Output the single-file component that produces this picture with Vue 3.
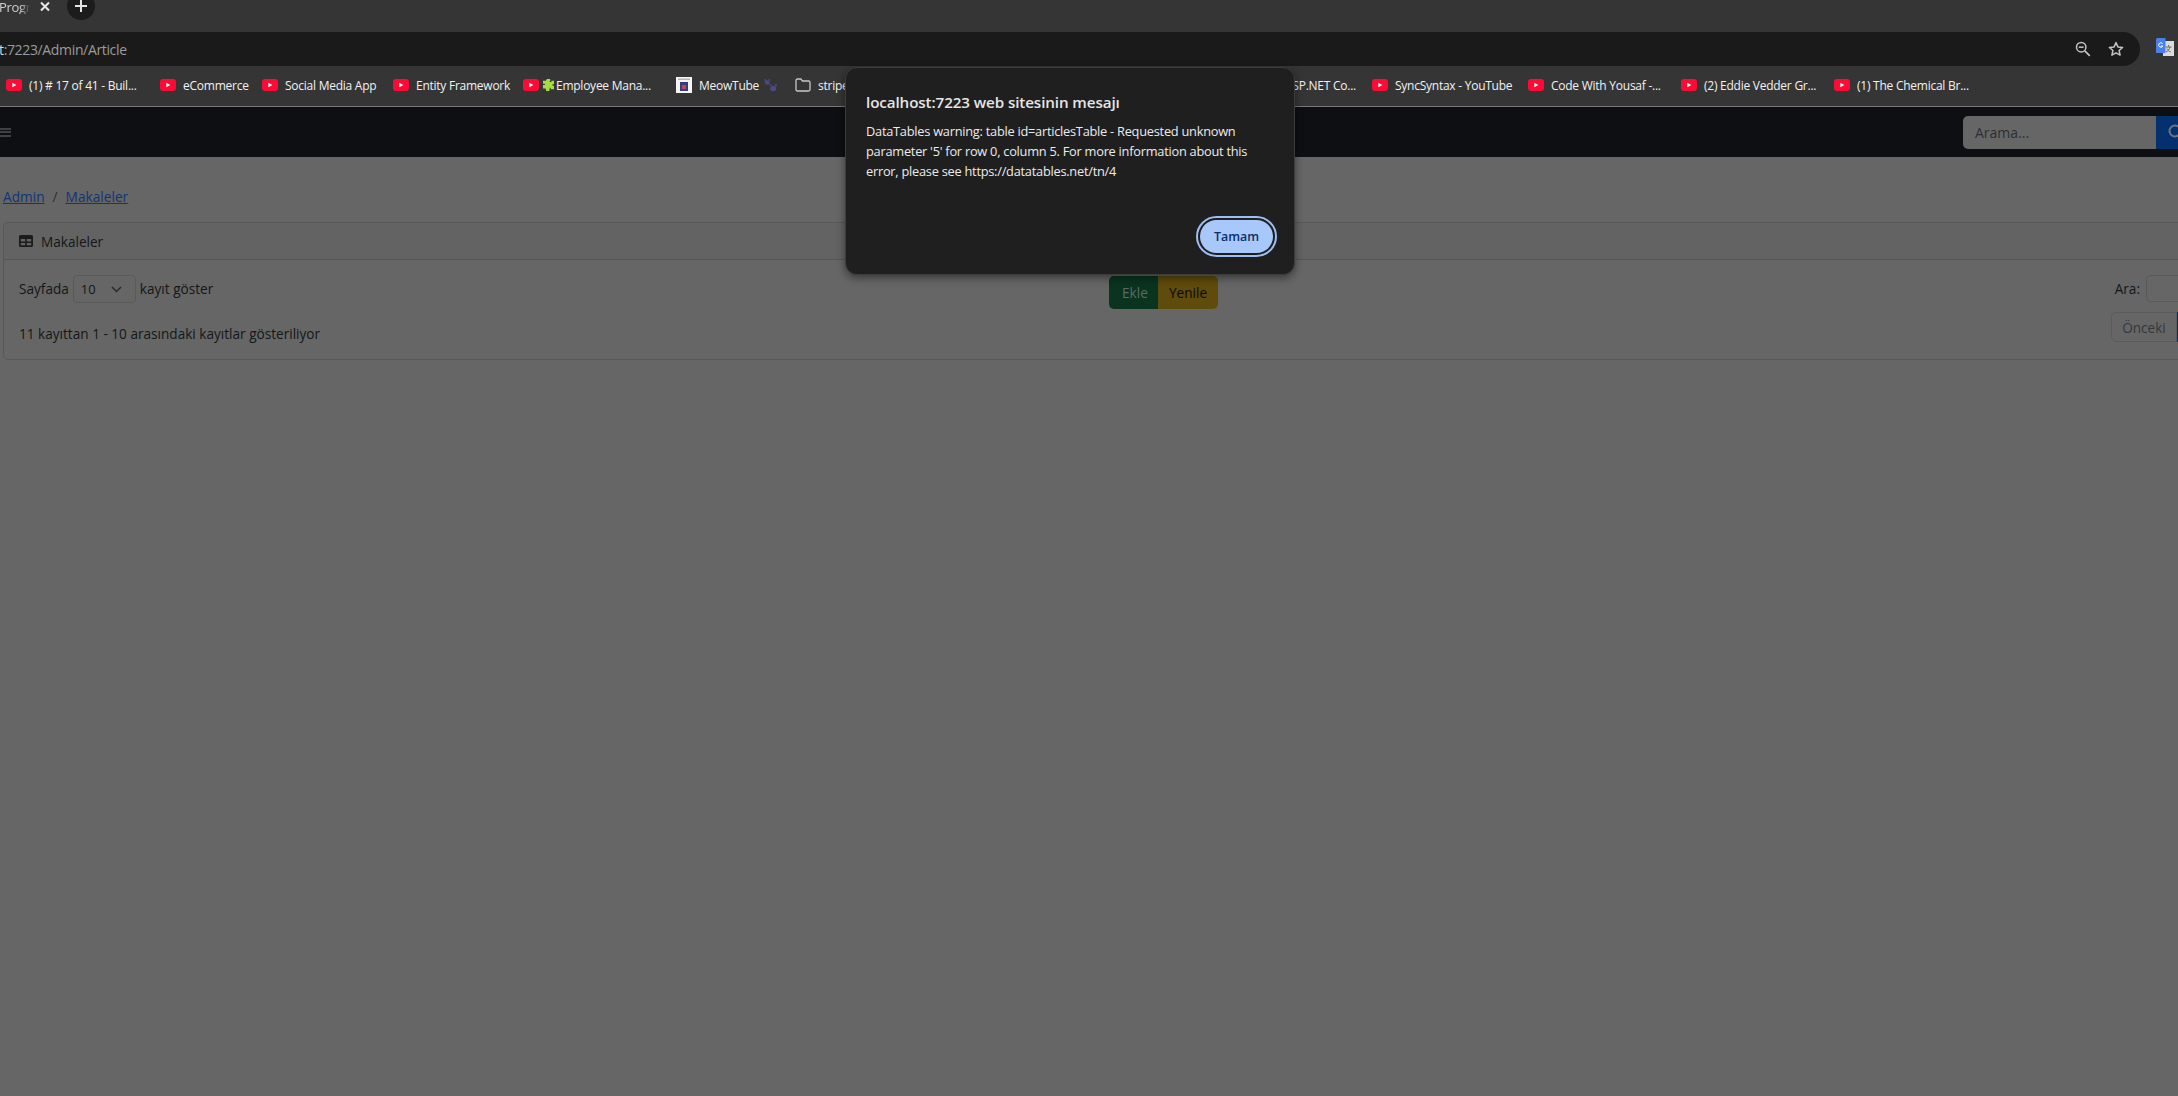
<script setup>
const bookmarks = [
  { kind: 'yt', text: '(1) # 17 of 41 - Buil...', width: 154 },
  { kind: 'yt', text: 'eCommerce', width: 102 },
  { kind: 'yt', text: 'Social Media App', width: 131 },
  { kind: 'yt', text: 'Entity Framework', width: 130 },
  { kind: 'puzzle', text: 'Employee Mana...', width: 153 },
  { kind: 'meow', text: 'MeowTube', width: 119 },
  { kind: 'folder', text: 'stripe', width: 467 },
  { kind: 'yt', text: 'ASP.NET Co...', width: 110 },
  { kind: 'yt', text: 'SyncSyntax - YouTube', width: 156 },
  { kind: 'yt', text: 'Code With Yousaf -...', width: 153 },
  { kind: 'yt', text: '(2) Eddie Vedder Gr...', width: 153 },
  { kind: 'yt', text: '(1) The Chemical Br...', width: 160 }
]
</script>

<template>
  <div class="screen">
    <div class="tabstrip">
      <span class="tab-title">Progra</span>
      <svg class="tab-close" width="12" height="12" viewBox="0 0 12 12">
        <path d="M2 1.5l8 8M10 1.5l-8 8" stroke="#e8e8e8" stroke-width="2" fill="none" />
      </svg>
      <span class="new-tab">
        <svg width="14" height="14" viewBox="0 0 14 14">
          <path d="M7 1v12M1 7h12" stroke="#e3e3e3" stroke-width="2" fill="none" />
        </svg>
      </span>
    </div>

    <div class="toolbar">
      <div class="omnibox">
        <span class="url"><span class="url-host">t</span>:7223/Admin/Article</span>
        <svg class="zoom-icon" width="16" height="16" viewBox="0 0 16 16" fill="none" stroke="#c4c4c4">
          <circle cx="6.2" cy="6.2" r="4.7" stroke-width="1.5" />
          <path d="M9.8 9.8l5 5" stroke-width="1.7" />
          <path d="M3.8 6.2h4.8" stroke-width="1.5" />
        </svg>
        <svg class="star-icon" width="16" height="16" viewBox="0 0 16 16">
          <path d="M8 1.6l1.9 4.3 4.7.5-3.5 3.1 1 4.6L8 11.8l-4.1 2.3 1-4.6-3.5-3.1 4.7-.5z" fill="none" stroke="#c4c4c4" stroke-width="1.5" stroke-linejoin="round" />
        </svg>
      </div>
      <svg class="translate-icon" width="18" height="20" viewBox="0 0 18 20">
        <rect x="7" y="3" width="11" height="15" fill="#dcdcdc" />
        <path d="M12.5 7v1.5M9.5 9h6M14 9c-.6 2.4-2 4-4 5M10.8 10.5c.7 1.6 2 2.900 4 3.500" stroke="#666" stroke-width="1" fill="none" />
        <path d="M1.500 0H9.500V15H0V1.500A1.500 1.500 0 0 1 1.500 0z" fill="#4a80ea" />
        <path d="M6.500 5.500A2.200 2.200 0 1 0 6.900 8H4.900" stroke="#fff" stroke-width="1" fill="none" />
      </svg>
    </div>

    <div class="bookmarks">
      <div v-for="b in bookmarks" :key="b.text" class="bookmark" :style="{ width: b.width + 'px' }">
        <svg v-if="b.kind === 'yt' || b.kind === 'puzzle'" class="bm-icon" width="16" height="12" viewBox="0 0 16 12">
          <rect width="16" height="12" rx="3" fill="#fd0a35" />
          <path d="M6.300 3.700l4 2.300-4 2.300z" fill="#fff" />
        </svg>
        <svg v-if="b.kind === 'puzzle'" class="bm-puzzle" width="11" height="12" viewBox="0 0 13 14">
          <path d="M4.500 0h4v2.500h-1l.5 1H10V2h3v4h-2l.5 2H13v4H9v-1.500L8 10l-.5 4h-4v-2.500L2 11H0V7h2.500L2 5.500H0V2h3.500z" fill="#a6dc3f" />
        </svg>
        <svg v-if="b.kind === 'meow'" class="bm-icon" width="16" height="16" viewBox="0 0 16 16">
          <rect width="16" height="16" fill="#f5f5f5" />
          <rect x="2" y="1.500" width="12" height="1.500" fill="#b5b5b5" />
          <rect x="4" y="5" width="8" height="9" fill="#3a3a78" />
          <rect x="6" y="8" width="4" height="4" fill="#b04a6a" />
        </svg>
        <svg v-if="b.kind === 'folder'" class="bm-icon" width="16" height="14" viewBox="0 0 16 14">
          <path d="M1 2.500A1.500 1.500 0 0 1 2.500 1h3.300l1.700 2h6A1.500 1.500 0 0 1 15 4.500v7a1.500 1.500 0 0 1-1.500 1.500h-11A1.500 1.500 0 0 1 1 11.500z" fill="none" stroke="#c7c7c7" stroke-width="1.300" />
        </svg>
        <span class="bm-text">{{ b.text }}</span>
        <svg v-if="b.kind === 'meow'" class="bm-paws" width="13" height="13" viewBox="0 0 12 12" fill="#4b4a86">
          <ellipse cx="3" cy="3.200" rx="2.200" ry="2" />
          <ellipse cx="8.500" cy="8.800" rx="2.800" ry="2.500" />
          <circle cx="1" cy="1" r=".9" />
          <circle cx="5" cy="1" r=".9" />
          <circle cx="6" cy="5.500" r="1" />
          <circle cx="11" cy="5.500" r="1" />
        </svg>
      </div>
    </div>

    <nav class="navbar">
      <span class="burger"></span>
      <div class="search">
        <span class="search-input">Arama...</span>
        <span class="search-btn">
          <svg width="16" height="16" viewBox="0 0 16 16" fill="none" stroke="#6c7480" stroke-width="2">
            <circle cx="7" cy="7" r="5.500" />
          </svg>
        </span>
      </div>
    </nav>

    <main class="page">
      <div class="crumbs">
        <a class="crumb">Admin</a>
        <span class="crumb-sep">/</span>
        <a class="crumb">Makaleler</a>
      </div>

      <section class="card">
        <header class="card-head">
          <svg width="14" height="12" viewBox="0 0 14 12">
            <path fill-rule="evenodd" d="M1.500 0h11A1.500 1.500 0 0 1 14 1.500v9a1.500 1.500 0 0 1-1.500 1.500h-11A1.500 1.500 0 0 1 0 10.500v-9A1.500 1.500 0 0 1 1.500 0zM1.800 4v2.500h4.400V4zm6 0v2.500h4.400V4zM1.800 8v2.200h4.400V8zm6 0v2.200h4.400V8z" fill="#1c1c1c" />
          </svg>
          <span>Makaleler</span>
        </header>
        <div class="card-body">
          <div class="row-top">
            <div class="length">
              <span>Sayfada</span>
              <span class="select">
                <span>10</span>
                <svg width="11" height="7" viewBox="0 0 11 7">
                  <path d="M1 1l4.500 4.500L10 1" fill="none" stroke="#2a2a2a" stroke-width="1.500" />
                </svg>
              </span>
              <span>kayıt göster</span>
            </div>
            <div class="btn-group">
              <span class="btn btn-add">Ekle</span>
              <span class="btn btn-refresh">Yenile</span>
            </div>
            <div class="filter">
              <span>Ara:</span>
              <span class="filter-input"></span>
            </div>
          </div>
          <div class="row-bottom">
            <span>11 kayıttan 1 - 10 arasındaki kayıtlar gösteriliyor</span>
            <div class="pager">
              <span class="page-prev">Önceki</span>
              <span class="page-current"></span>
            </div>
          </div>
        </div>
      </section>
    </main>

    <div class="dialog">
      <div class="dialog-title">localhost:7223 web sitesinin mesajı</div>
      <div class="dialog-text">
        DataTables warning: table id=articlesTable - Requested unknown<br />
        parameter '5' for row 0, column 5. For more information about this<br />
        error, please see https://datatables.net/tn/4
      </div>
      <div class="dialog-actions">
        <span class="dialog-btn">Tamam</span>
      </div>
    </div>
  </div>
</template>

<style>
html,
body {
  margin: 0;
  overflow: hidden;
  background: #666666;
}
</style>

<style scoped>
.screen {
  position: relative;
  width: 2178px;
  height: 1096px;
  overflow: hidden;
  display: flex;
  flex-direction: column;
  font-family: "Open Sans", "Noto Sans", sans-serif;
  background: #666666;
}

.tabstrip {
  height: 32px;
  flex: none;
  background: #353535;
  display: flex;
  align-items: flex-start;
}

.tab-title {
  margin-left: -1px;
  width: 31px;
  overflow: hidden;
  font-size: 13px;
  line-height: 14px;
  color: #cfcfcf;
  letter-spacing: -0.3px;
  white-space: nowrap;
  mask-image: linear-gradient(90deg, #000 70%, transparent);
}

.tab-close {
  margin-left: 9px;
  margin-top: 1px;
}

.new-tab {
  margin-left: 16px;
  margin-top: -8px;
  width: 28px;
  height: 28px;
  border-radius: 50%;
  background: #1c1c1c;
  display: flex;
  align-items: center;
  justify-content: center;
}

.toolbar {
  height: 34px;
  flex: none;
  background: #353535;
  display: flex;
  align-items: center;
}

.omnibox {
  width: 2140px;
  height: 34px;
  flex: none;
  background: #1a1a1a;
  border-radius: 0 17px 17px 0;
  display: flex;
  align-items: center;
}

.url {
  font-size: 14px;
  color: #9a9a9a;
  letter-spacing: -0.35px;
  margin-right: auto;
  margin-left: -1px;
}

.url-host {
  color: #d8d8d8;
}

.zoom-icon {
  margin-right: 17px;
}

.star-icon {
  margin-right: 16px;
}

.translate-icon {
  margin-left: 16px;
  margin-top: -2px;
  flex: none;
}

.bookmarks {
  height: 41px;
  flex: none;
  box-sizing: border-box;
  border-bottom: 1px solid #777777;
  background: #353535;
  display: flex;
  align-items: center;
  padding-left: 6px;
  padding-bottom: 2px;
}

.bookmark {
  flex: none;
  display: flex;
  align-items: center;
  white-space: nowrap;
}

.bm-icon {
  margin-right: 7px;
  flex: none;
}

.bm-puzzle {
  margin-left: -3px;
  margin-right: 2px;
  flex: none;
}

.bm-text {
  font-size: 12px;
  color: #f2f2f2;
  letter-spacing: -0.25px;
}

.bm-paws {
  margin-left: 5px;
}

.navbar {
  height: 50px;
  flex: none;
  background: #0e0f12;
  display: flex;
  align-items: center;
  justify-content: space-between;
}

.burger {
  width: 11px;
  height: 9px;
  border-top: 2px solid #3f4145;
  border-bottom: 2px solid #3f4145;
  box-sizing: border-box;
  background: linear-gradient(#3f4145, #3f4145) center / 100% 2px no-repeat;
}

.search {
  display: flex;
  height: 33px;
  margin-right: -22px;
}

.search-input {
  width: 193px;
  box-sizing: border-box;
  background: #666666;
  border-radius: 5px 0 0 5px;
  padding-left: 12px;
  font-size: 14px;
  line-height: 33px;
  color: #2b2f32;
}

.search-btn {
  width: 44px;
  background: #03306e;
  display: flex;
  align-items: center;
  padding-left: 12px;
  box-sizing: border-box;
}

.page {
  flex: 1;
  background: #666666;
  padding: 29px 0 0 3px;
  font-size: 13.6px;
  color: #141618;
}

.crumbs {
  display: flex;
  gap: 8px;
  height: 22px;
  line-height: 22px;
  font-size: 13.7px;
  margin-bottom: 14px;
}

.crumb {
  color: #0f3578;
  text-decoration: underline;
}

.crumb-sep {
  color: #2e2e2e;
}

.card {
  width: 2220px;
  height: 138px;
  box-sizing: border-box;
  border: 1px solid #585858;
  border-radius: 5px;
}

.card-head {
  height: 37px;
  box-sizing: border-box;
  border-bottom: 1px solid #565656;
  background: #636363;
  border-radius: 5px 5px 0 0;
  display: flex;
  align-items: center;
  gap: 8px;
  padding-left: 15px;
}

.card-body {
  padding: 15px 18px 0 15px;
}

.row-top {
  display: grid;
  grid-template-columns: 1105px 1fr auto;
  height: 34px;
}

.length {
  display: flex;
  align-items: flex-start;
  gap: 4px;
  line-height: 28px;
}

.select {
  width: 63px;
  height: 28px;
  box-sizing: border-box;
  border: 1px solid #5a5a5a;
  border-radius: 4px;
  display: flex;
  align-items: center;
  justify-content: space-between;
  padding: 0 13px 0 7px;
  font-size: 13px;
}

.btn-group {
  display: flex;
  margin-left: -15px;
  margin-top: 1px;
  height: 33px;
}

.btn {
  line-height: 33px;
  box-sizing: border-box;
}

.btn-add {
  width: 49px;
  padding-left: 13px;
  background: #0a3420;
  color: #5d6b62;
  border-radius: 5px 0 0 5px;
}

.btn-refresh {
  width: 60px;
  padding-left: 11px;
  background: #5f4b0b;
  color: #0a0a0a;
  border-radius: 0 5px 5px 0;
}

.filter {
  display: flex;
  gap: 6px;
  line-height: 27px;
  align-items: flex-start;
}

.filter-input {
  width: 58px;
  height: 27px;
  box-sizing: border-box;
  border: 1px solid #5a5a5a;
  border-radius: 4px;
}

.row-bottom {
  display: flex;
  justify-content: space-between;
  margin-top: 3px;
}

.row-bottom > span {
  line-height: 44px;
}

.pager {
  display: flex;
  height: 30px;
}

.page-prev {
  width: 66px;
  box-sizing: border-box;
  border: 1px solid #5a5a5a;
  border-radius: 5px 0 0 5px;
  text-align: center;
  line-height: 30px;
  color: #34383c;
}

.page-current {
  width: 27px;
  background: #03306e;
}

.dialog {
  position: absolute;
  left: 845px;
  top: 67px;
  width: 450px;
  height: 208px;
  box-sizing: border-box;
  padding: 24px 20px 0;
  background: #1f1f1f;
  border: 1px solid #3c3c3c;
  border-radius: 12px;
  box-shadow: 0 3px 8px rgba(0, 0, 0, 0.45);
}

.dialog-title {
  font-size: 15.2px;
  line-height: 20px;
  font-weight: 600;
  color: #e6e6e6;
  letter-spacing: -0.1px;
}

.dialog-text {
  margin-top: 9px;
  font-size: 12.8px;
  line-height: 20px;
  color: #ececec;
  letter-spacing: -0.25px;
}

.dialog-actions {
  position: absolute;
  right: 21px;
  bottom: 21px;
}

.dialog-btn {
  display: block;
  width: 73px;
  height: 33px;
  box-sizing: border-box;
  background: #a8c7fa;
  border-radius: 17px;
  text-align: center;
  font-size: 12.4px;
  font-weight: 600;
  line-height: 33px;
  color: #0b2f6e;
  outline: 2px solid #9fbdf0;
  outline-offset: 2px;
}
</style>
